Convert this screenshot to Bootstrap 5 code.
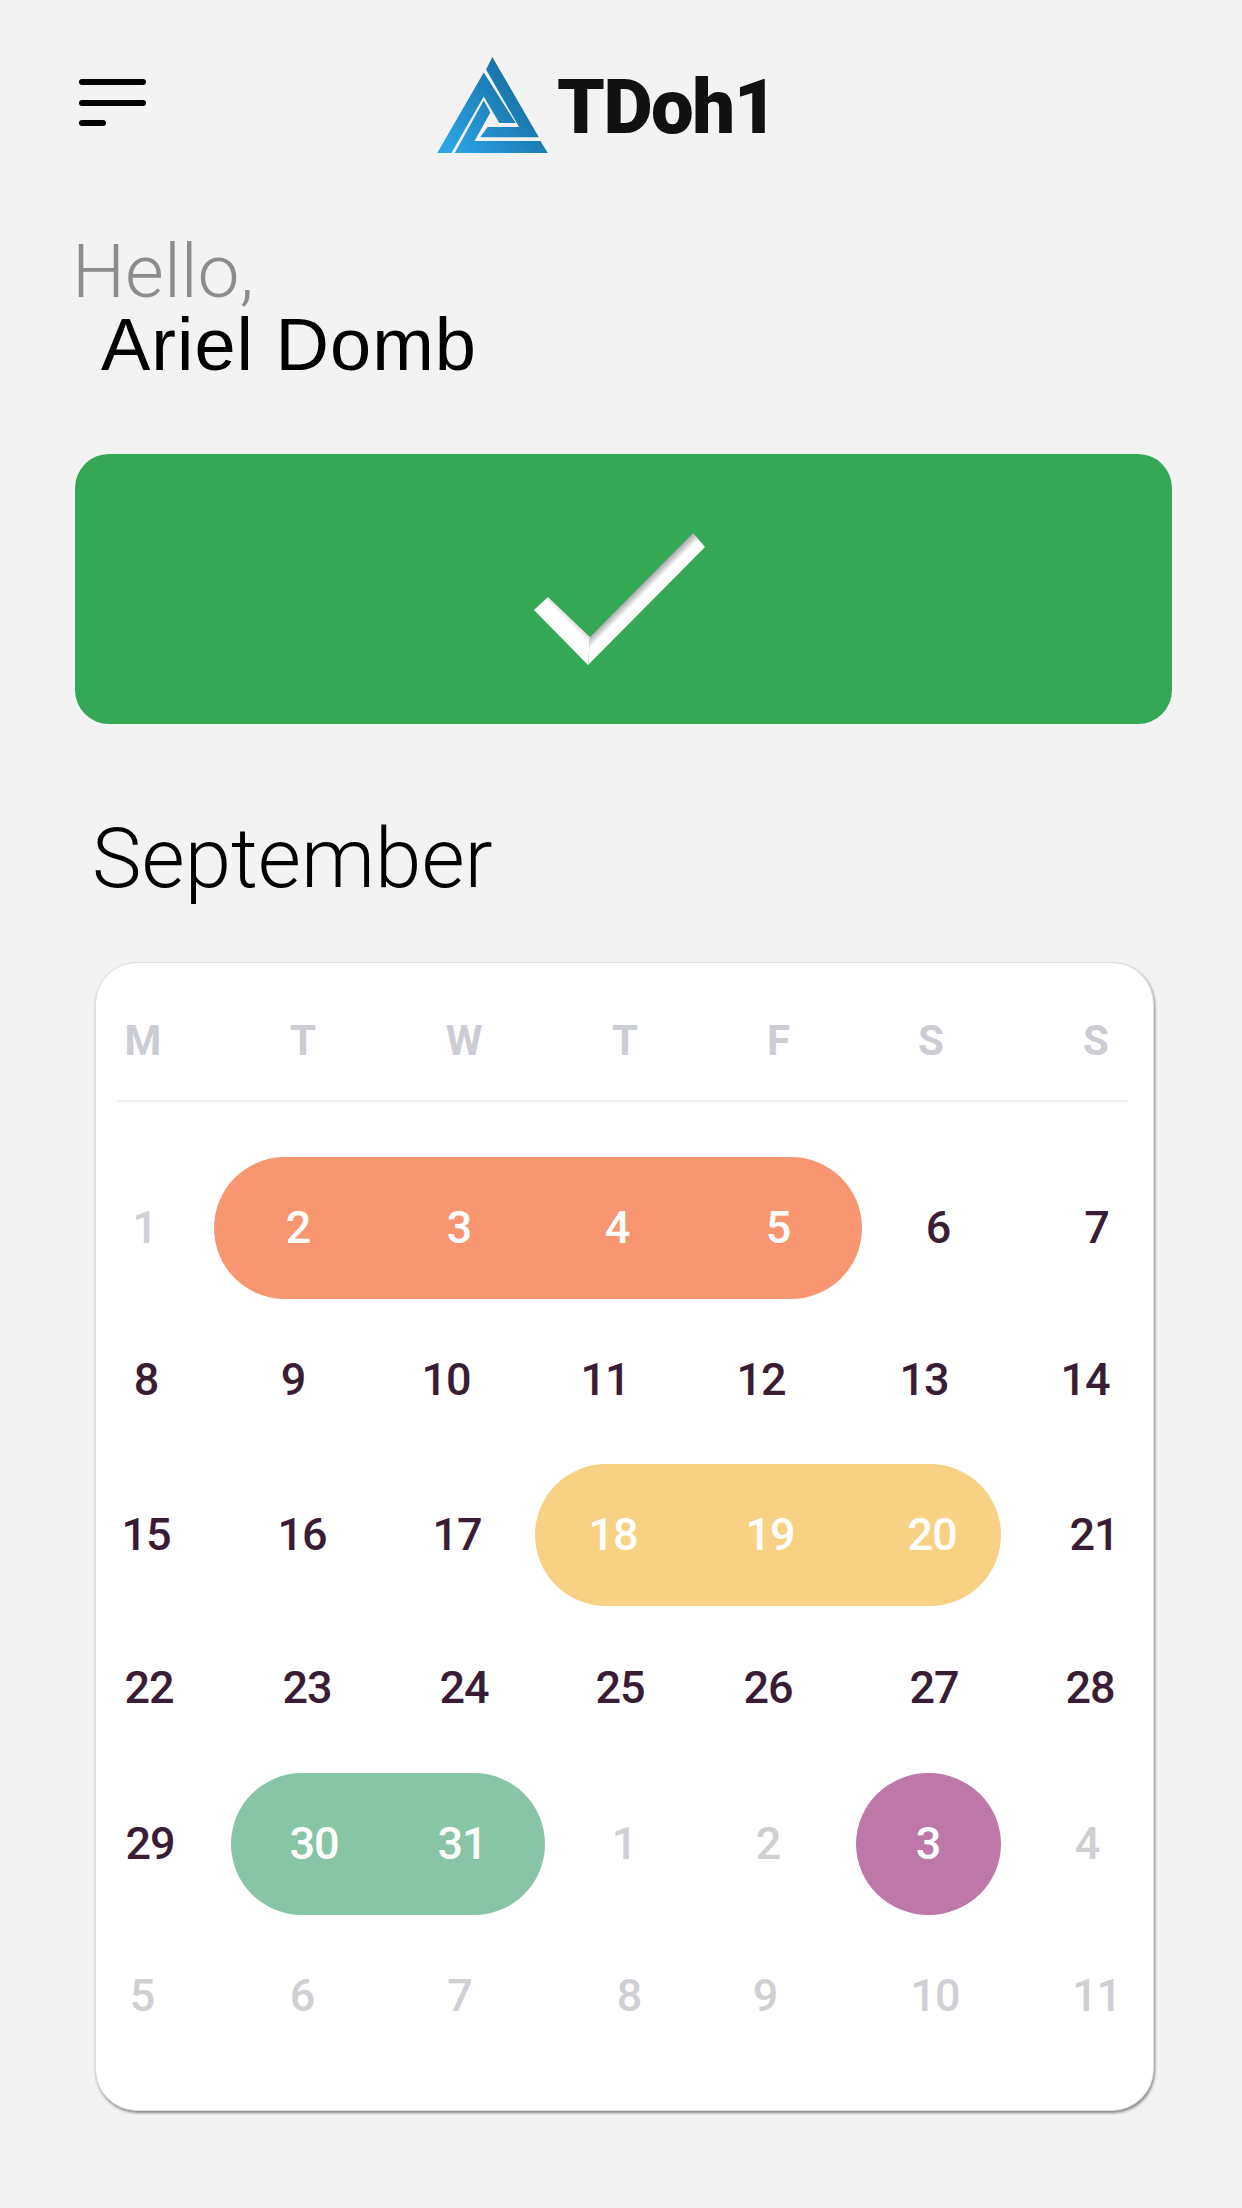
<!DOCTYPE html>
<html lang="en">
  <head>
    <meta charset="UTF-8" />
    <meta name="viewport" content="width=device-width, initial-scale=1.0" />
    <title>TDoh1</title>
    <link
      href="https://cdn.jsdelivr.net/npm/bootstrap@5.3.0/dist/css/bootstrap.min.css"
      rel="stylesheet"
    />
    <style>
      body { background: #f3f3f3; min-height: 2208px; font-family: Roboto, sans-serif; }
      .top-bar { padding: 57px 0 0 79px; height: 153px; }
      .menu-btn { width: 67px; padding-top: 22px; margin-right: 290px; }
      .menu-btn span { display: block; height: 6px; border-radius: 3px; background: #000; margin-bottom: 14.5px; }
      .menu-btn span:last-child { width: 27px; }
      .brand-name { font-weight: 900; font-size: 76px; line-height: 96px; color: #111; letter-spacing: -1.5px; margin-left: 8px; margin-top: 2px; }
      .hello { margin: 82px 0 0 72px; font-size: 75px; line-height: 73px; font-weight: 300; color: #8c8c8c; }
      .user-name { margin: 0 0 0 101px; font-family: "Liberation Sans", sans-serif; font-size: 74px; line-height: 73px; color: #000; letter-spacing: 1px; }
      .done-box { margin: 73px 70px 0 75px; height: 270px; background: #35a856; border-radius: 34px; padding: 79px 0 0 459px; }
      .month-title { margin: 88px 0 0 92px; font-size: 83.5px; line-height: 94px; font-weight: 300; color: #000; }
      .cal-card { margin: 56px 88px 0 95px; height: 1149px; border-radius: 42px; background: #fff; border: 1px solid #dedede; box-shadow: 1px 2px 3px rgba(0, 0, 0, .45); padding-top: 46px; }
      .cal-rule { height: 2px; background: #eeeeee; margin: 31px 25px 0 21px; }
      .cal-head, .cal-week { display: grid; font-family: Roboto, sans-serif; }
      .cal-head { height: 60px; font-size: 42px; font-weight: 700; color: #ccccd4; }
      .cal-week { height: 142px; font-size: 45px; font-weight: 500; color: #3a1d34; letter-spacing: -1px; }
      .cal-d { grid-row: 1; width: 0; z-index: 1; display: flex; align-items: center; justify-content: center; white-space: nowrap; }
      .cal-d:nth-child(1) { grid-column: 1; }
      .cal-d:nth-child(2) { grid-column: 2; }
      .cal-d:nth-child(3) { grid-column: 3; }
      .cal-d:nth-child(4) { grid-column: 4; }
      .cal-d:nth-child(5) { grid-column: 5; }
      .cal-d:nth-child(6) { grid-column: 6; }
      .cal-d:nth-child(7) { grid-column: 7; }
      .off { color: #cfcfd4; }
      .on { color: #fff; }
      .cal-pill { grid-row: 1; border-radius: 71px; }
      .pill-orange { grid-column: 2 / 6; margin: 0 76px 0 -84px; background: #f89671; }
      .pill-yellow { grid-column: 4 / 7; margin: 0 93px 0 -78px; background: #f8d184; }
      .pill-green { grid-column: 2 / 4; margin: 0 79px 0 -83px; background: #88c4a6; }
      .pill-purple { grid-column: 6 / 7; margin: 0 86px 0 -72px; background: #bd78a8; border-radius: 50%; }
      .head-t { padding-left: 47px; grid-template-columns: 160px 161px 161px 153.5px 152.5px 165px 1fr; }
      .wk1 { margin-top: 55px; padding-left: 48.5px; grid-template-columns: 153.5px 161px 158px 161px 160px 158.5px 1fr; }
      .wk2 { margin-top: 10px; padding-left: 50px; grid-template-columns: 147px 153px 159px 156px 163px 161px 1fr; }
      .wk3 { margin-top: 13px; padding-left: 50px; grid-template-columns: 156px 155px 156px 157px 162px 162px 1fr; }
      .wk4 { margin-top: 11px; padding-left: 53px; grid-template-columns: 158px 157px 156px 148px 166px 156px 1fr; }
      .wk5 { margin-top: 14px; padding-left: 54px; grid-template-columns: 164px 148px 162px 144px 160px 159px 1fr; }
      .wk6 { margin-top: 10px; padding-left: 46px; grid-template-columns: 160px 157.5px 169.5px 136px 170px 161.5px 1fr; }
    </style>
  </head>
  <body>
    <header class="top-bar d-flex align-items-start">
      <div class="menu-btn"><span></span><span></span><span></span></div>
      <svg width="113" height="96" viewBox="52 50 335 291" aria-hidden="true">
        <defs>
          <linearGradient id="logoGrad" gradientUnits="userSpaceOnUse" x1="80" y1="341" x2="340" y2="130">
            <stop offset="0" stop-color="#2ea6ea" />
            <stop offset="1" stop-color="#146d9e" />
          </linearGradient>
        </defs>
        <g fill="url(#logoGrad)">
          <polygon points="219,50 360,293 182,293 205,262 300,262 200,88" />
          <polygon points="193,97 290,250 240,250 193,170 95,341 52,341" />
          <polygon points="193,182 213,218 165,305 365,305 387,341 105,341" />
        </g>
      </svg>
      <div class="brand-name">TDoh1</div>
    </header>

    <p class="hello">Hello,</p>
    <p class="user-name">Ariel Domb</p>

    <div class="done-box">
      <svg width="171" height="132" viewBox="0 0 171 132" class="d-block" aria-hidden="true">
        <defs>
          <linearGradient id="armLong" gradientUnits="userSpaceOnUse" x1="107" y1="52" x2="118" y2="63">
            <stop offset="0" stop-color="#a5a5a5" />
            <stop offset=".55" stop-color="#fff" />
          </linearGradient>
          <linearGradient id="armShort" gradientUnits="userSpaceOnUse" x1="35" y1="84" x2="24" y2="95">
            <stop offset="0" stop-color="#dcdcdc" />
            <stop offset=".3" stop-color="#fff" />
          </linearGradient>
        </defs>
        <polygon points="56,104 159,0 171,14 54,132" fill="url(#armLong)" />
        <polygon points="0,77 14,64 56,104 54,132" fill="url(#armShort)" />
      </svg>
    </div>

    <h2 class="month-title">September</h2>

    <div class="cal-card">
      <div class="cal-head head-t">
        <div class="cal-d">M</div><div class="cal-d">T</div><div class="cal-d">W</div><div class="cal-d">T</div><div class="cal-d">F</div><div class="cal-d">S</div><div class="cal-d">S</div>
      </div>
      <div class="cal-rule"></div>
      <div class="cal-week wk1">
        <div class="cal-d off">1</div><div class="cal-d on">2</div><div class="cal-d on">3</div><div class="cal-d on">4</div><div class="cal-d on">5</div><div class="cal-d">6</div><div class="cal-d">7</div>
        <div class="cal-pill pill-orange"></div>
      </div>
      <div class="cal-week wk2">
        <div class="cal-d">8</div><div class="cal-d">9</div><div class="cal-d">10</div><div class="cal-d">11</div><div class="cal-d">12</div><div class="cal-d">13</div><div class="cal-d">14</div>
      </div>
      <div class="cal-week wk3">
        <div class="cal-d">15</div><div class="cal-d">16</div><div class="cal-d">17</div><div class="cal-d on">18</div><div class="cal-d on">19</div><div class="cal-d on">20</div><div class="cal-d">21</div>
        <div class="cal-pill pill-yellow"></div>
      </div>
      <div class="cal-week wk4">
        <div class="cal-d">22</div><div class="cal-d">23</div><div class="cal-d">24</div><div class="cal-d">25</div><div class="cal-d">26</div><div class="cal-d">27</div><div class="cal-d">28</div>
      </div>
      <div class="cal-week wk5">
        <div class="cal-d">29</div><div class="cal-d on">30</div><div class="cal-d on">31</div><div class="cal-d off">1</div><div class="cal-d off">2</div><div class="cal-d on">3</div><div class="cal-d off">4</div>
        <div class="cal-pill pill-green"></div>
        <div class="cal-pill pill-purple"></div>
      </div>
      <div class="cal-week wk6">
        <div class="cal-d off">5</div><div class="cal-d off">6</div><div class="cal-d off">7</div><div class="cal-d off">8</div><div class="cal-d off">9</div><div class="cal-d off">10</div><div class="cal-d off">11</div>
      </div>
    </div>

    <script src="https://cdn.jsdelivr.net/npm/bootstrap@5.3.0/dist/js/bootstrap.bundle.min.js"></script>
  </body>
</html>
